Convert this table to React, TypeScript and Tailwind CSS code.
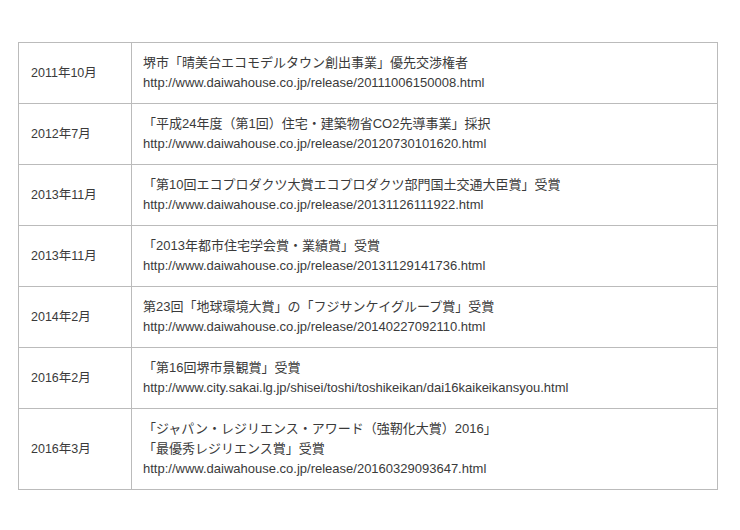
import React from "react";

const rows: { date: string; lines: string[] }[] = [
  { date: "2011年10月", lines: ["堺市「晴美台エコモデルタウン創出事業」優先交渉権者", "http://www.daiwahouse.co.jp/release/20111006150008.html"] },
  { date: "2012年7月", lines: ["「平成24年度（第1回）住宅・建築物省CO2先導事業」採択", "http://www.daiwahouse.co.jp/release/20120730101620.html"] },
  { date: "2013年11月", lines: ["「第10回エコプロダクツ大賞エコプロダクツ部門国土交通大臣賞」受賞", "http://www.daiwahouse.co.jp/release/20131126111922.html"] },
  { date: "2013年11月", lines: ["「2013年都市住宅学会賞・業績賞」受賞", "http://www.daiwahouse.co.jp/release/20131129141736.html"] },
  { date: "2014年2月", lines: ["第23回「地球環境大賞」の「フジサンケイグループ賞」受賞", "http://www.daiwahouse.co.jp/release/20140227092110.html"] },
  { date: "2016年2月", lines: ["「第16回堺市景観賞」受賞", "http://www.city.sakai.lg.jp/shisei/toshi/toshikeikan/dai16kaikeikansyou.html"] },
  { date: "2016年3月", lines: ["「ジャパン・レジリエンス・アワード（強靭化大賞）2016」", "「最優秀レジリエンス賞」受賞", "http://www.daiwahouse.co.jp/release/20160329093647.html"] },
];

export default function App() {
  return (
    <div
      className="w-[740px] h-[530px] bg-white pt-[42px] pl-[18px]"
      style={{ fontFamily: '"Liberation Sans", "Noto Sans CJK JP", sans-serif' }}
    >
      <table className="w-[700px] border-collapse text-[13px] leading-[20px] text-[#3a3a3a]">
        <tbody>
          {rows.map((r, i) => (
            <tr key={i}>
              <td className="w-[113px] border border-[#bbb] pl-[12px] py-[10px] align-middle text-[12.5px]">{r.date}</td>
              <td className="border border-[#bbb] pl-[11px] py-[10px] align-middle">
                {r.lines.map((l, j) => (
                  <div key={j}>{l}</div>
                ))}
              </td>
            </tr>
          ))}
        </tbody>
      </table>
    </div>
  );
}
